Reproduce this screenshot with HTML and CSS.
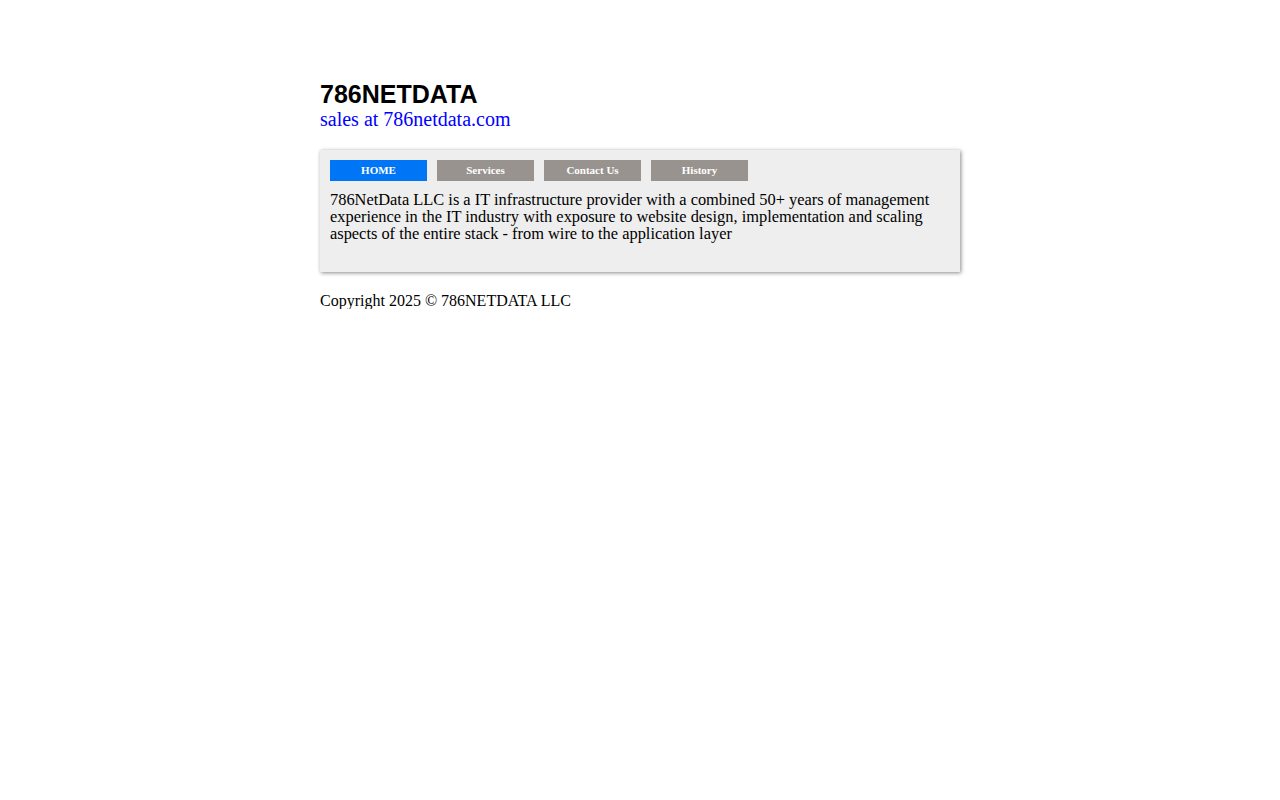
FILE: index.html
```html
<!DOCTYPE html>
<html>
<head>
<meta charset="utf-8">
<title>786NETDATA</title>
<link rel="stylesheet" href="styles.css">
</head>
<body>
<div class="page">
  <header class="masthead">
    <h1 class="brand">786NETDATA</h1>
    <a class="contact" href="#">sales at 786netdata.com</a>
  </header>
  <section class="card">
    <nav class="nav">
      <a class="tab tab-active" href="#">HOME</a>
      <a class="tab" href="#">Services</a>
      <a class="tab" href="#">Contact Us</a>
      <a class="tab" href="#">History</a>
    </nav>
    <p class="intro">786NetData LLC is a IT infrastructure provider with a combined 50+ years of management experience in the IT industry with exposure to website design, implementation and scaling aspects of the entire stack - from wire to the application layer</p>
  </section>
  <footer class="footer">Copyright 2025 &copy; 786NETDATA LLC</footer>
</div>
</body>
</html>
```

FILE: styles.css
```css
html, body {
  margin: 0;
  padding: 0;
  background: #ffffff;
}
body {
  font-family: Georgia, "Liberation Serif", serif;
  color: #000;
}
.page {
  width: 640px;
  margin: 0 auto;
  padding-top: 80px;
}
.masthead {
  display: flex;
  flex-direction: column;
}
.brand {
  margin: 0;
  font-family: "Liberation Sans", Arial, sans-serif;
  font-weight: bold;
  font-size: 25px;
  line-height: 28px;
  color: #000;
}
.contact {
  font-size: 20px;
  line-height: 22px;
  color: #0000ff;
  text-decoration: none;
}
.card {
  margin-top: 20px;
  background: #eeeeee;
  box-shadow: 1px 1px 4px #8a8a8a;
  padding: 10px 10px 30px;
}
.nav {
  display: flex;
  gap: 10px;
}
.tab {
  width: 97px;
  height: 21px;
  line-height: 21px;
  text-align: center;
  background: #98938f;
  color: #ffffff;
  font-size: 11px;
  font-weight: bold;
  text-decoration: none;
}
.tab-active {
  background: #0076f6;
}
.intro {
  margin: 10px 0 0;
  font-size: 16.4px;
  line-height: 17px;
}
.footer {
  margin-top: 20px;
  font-size: 16px;
  line-height: 17px;
}
```
